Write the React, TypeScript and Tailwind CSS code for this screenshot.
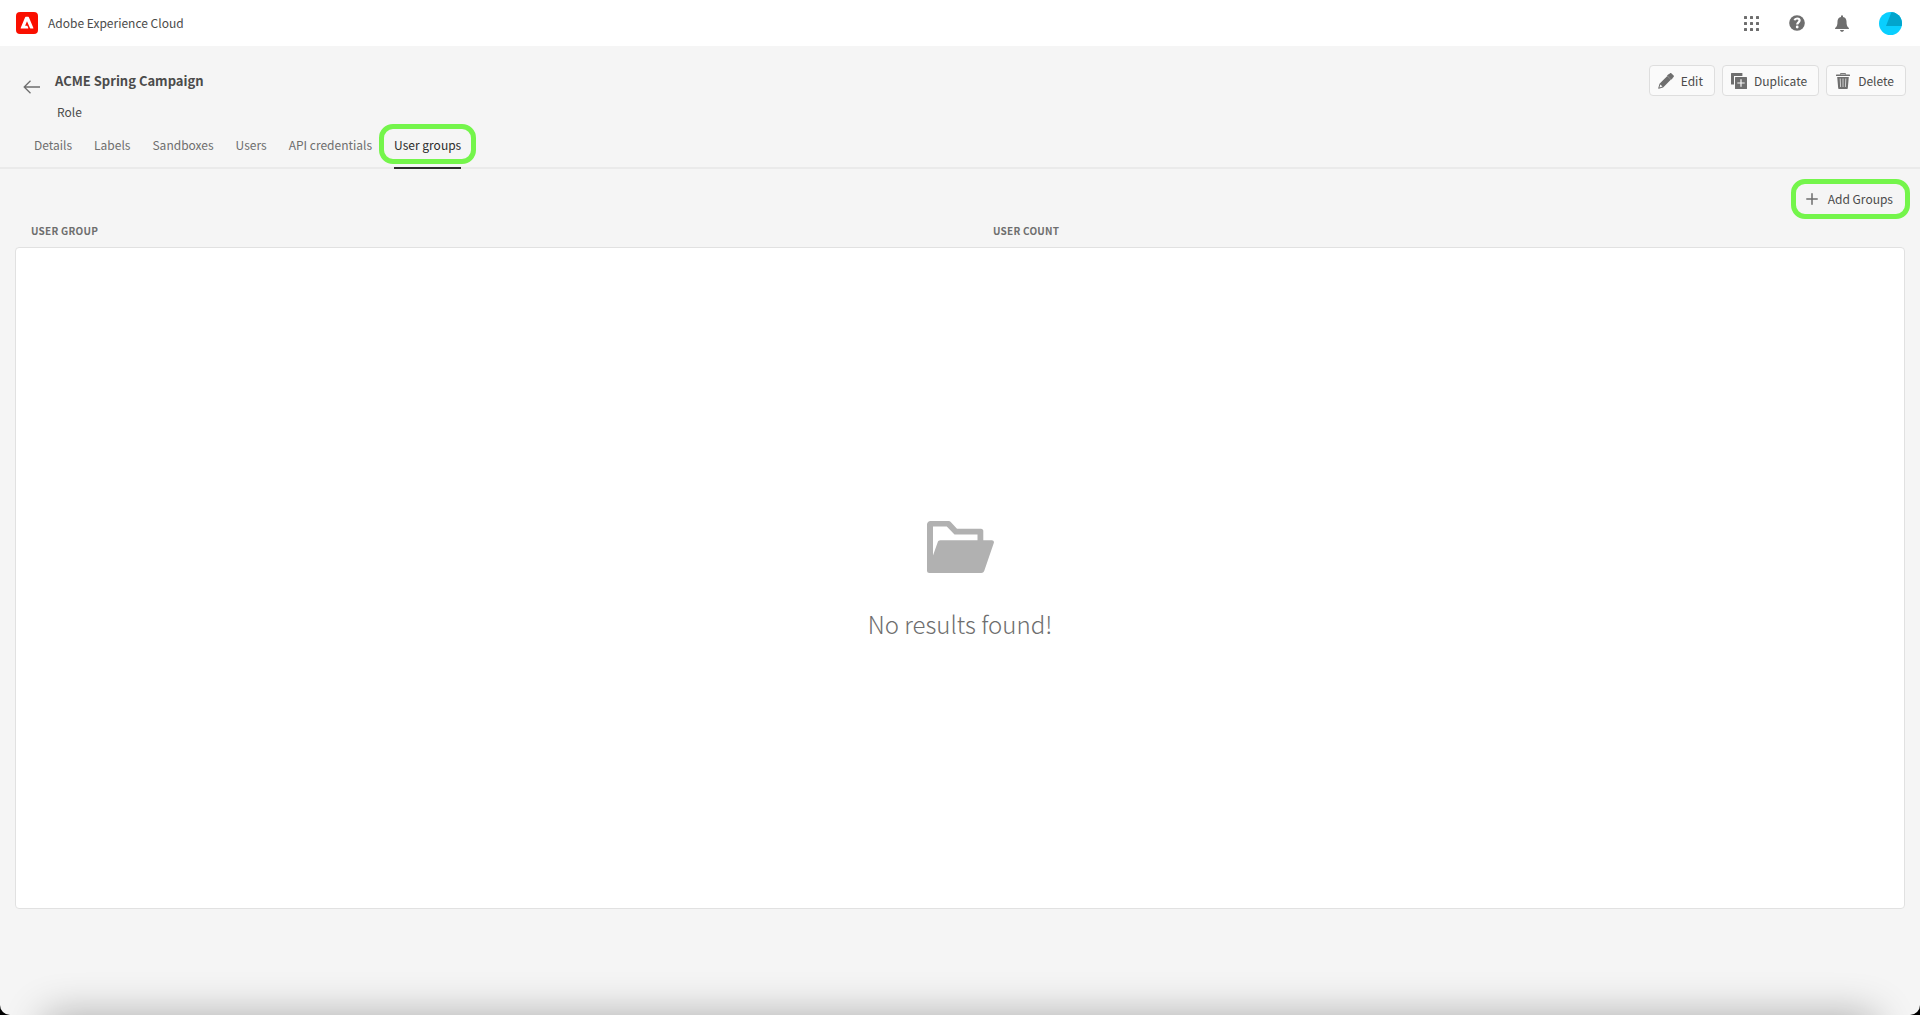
import type { ReactNode } from "react";

const TABS = ["Details", "Labels", "Sandboxes", "Users", "API credentials", "User groups"];
const ACTIVE_TAB = "User groups";

function AdobeLogo() {
  return (
    <svg viewBox="0 0 240 240" className="size-[22px]" aria-hidden="true">
      <rect width="240" height="240" rx="44" fill="#fa0f00" />
      <path
        transform="translate(0 3)"
        fill="#fff"
        d="M186.617 175.95h-28.506a6.243 6.243 0 0 1-5.847-3.769l-30.947-72.359a1.364 1.364 0 0 0-2.611-.034L99.42 145.731a1.635 1.635 0 0 0 1.506 2.269h21.2a3.27 3.27 0 0 1 3.01 1.994l9.281 20.655a3.812 3.812 0 0 1-3.507 5.301H53.734a3.518 3.518 0 0 1-3.213-4.904L99.625 54.278A6.639 6.639 0 0 1 105.843 50h28.314a6.628 6.628 0 0 1 6.218 4.278l49.455 116.768a3.518 3.518 0 0 1-3.213 4.904z"
      />
    </svg>
  );
}

function AppsIcon() {
  const steps = [0, 6, 12];
  return (
    <svg viewBox="0 0 15 15" className="size-[15px]" fill="#6e6e6e" aria-hidden="true">
      {steps.map((y) => steps.map((x) => <rect key={`${x}-${y}`} x={x} y={y} width="3" height="3" rx="0.5" />))}
    </svg>
  );
}

function HelpIcon() {
  return (
    <svg viewBox="0 0 16 16" className="size-4" aria-hidden="true">
      <circle cx="8" cy="8" r="7.8" fill="#6e6e6e" />
      <path d="M5.500 5.300C5.900 4 6.900 3.500 8.100 3.500c1.500 0 2.500.8 2.500 2.100 0 1.700-2.400 1.800-2.400 3.800" fill="none" stroke="#fff" strokeWidth="2.200" />
      <circle cx="8.200" cy="12" r="1.400" fill="#fff" />
    </svg>
  );
}

function BellIcon() {
  return (
    <svg viewBox="0 0 14 17" className="h-[17px] w-[14px]" fill="#6e6e6e" aria-hidden="true">
      <path d="M6 1.200a1 1 0 0 1 2 0v.8c2.300.5 3.500 2.300 3.500 4.600 0 3.600.6 4.900 2.100 6.100.6.500.4 1.300-.3 1.300H.7c-.7 0-.9-.8-.3-1.300C1.900 11.500 2.500 10.200 2.500 6.600 2.500 4.300 3.700 2.500 6 2z" />
      <path d="M5 15h4c-.2 1-1 1.800-2 1.800S5.200 16 5 15z" />
    </svg>
  );
}

function Avatar() {
  return (
    <svg viewBox="0 0 23 23" className="size-[23px]" aria-hidden="true">
      <defs>
        <clipPath id="avatar-clip">
          <circle cx="11.500" cy="11.500" r="11.500" />
        </clipPath>
      </defs>
      <g clipPath="url(#avatar-clip)">
        <rect width="23" height="23" fill="#09cfff" />
        <path d="M12.500 0H23v14H7z" fill="#02a5cd" />
      </g>
    </svg>
  );
}

function BackIcon() {
  return (
    <svg viewBox="0 0 18 14" className="h-[14px] w-[18px]" fill="none" stroke="#6e6e6e" strokeWidth="1.300" aria-hidden="true">
      <path d="M17 7H1.500M7.500.8 1.200 7l6.300 6.200" />
    </svg>
  );
}

function EditIcon() {
  return (
    <svg viewBox="0 0 16 16" className="size-4" fill="#6e6e6e" aria-hidden="true">
      <path d="M10.200 2 12 .3a.9.9 0 0 1 1.300 0l2.300 2.300a.9.9 0 0 1 0 1.300L13.900 5.700zM9.300 2.900 13 6.600l-7.900 7.900-4.300 1.300c-.4.1-.7-.2-.6-.6l1.300-4.400zM2.400 11.500l-1 3.100 3.100-1z" fillRule="evenodd" />
      <path d="M9 2.600l1.500-1.300 4 4L13.200 6.800z" />
    </svg>
  );
}

function DuplicateIcon() {
  return (
    <svg viewBox="0 0 16 16" className="size-4" fill="#6e6e6e" aria-hidden="true">
      <path d="M.6 0h10.800v3H3v8.500H.6a.6.6 0 0 1-.6-.6V.6A.6.6 0 0 1 .6 0z" />
      <path
        fillRule="evenodd"
        d="M4.600 4h10.800a.6.6 0 0 1 .6.600v10.800a.6.6 0 0 1-.6.600H4.600a.6.6 0 0 1-.6-.6V4.600A.6.600 0 0 1 4.600 4zM9.400 6.300v3.100H6.300v1.200h3.100v3.100h1.200v-3.100h3.100V9.400h-3.100V6.300z"
      />
    </svg>
  );
}

function DeleteIcon() {
  return (
    <svg viewBox="-1 0 16 16" className="size-4" aria-hidden="true">
      <path d="M4.500 1.500V.6h5v.9" fill="none" stroke="#6e6e6e" strokeWidth="1" />
      <rect y="1.500" width="14" height="1.500" rx=".5" fill="#6e6e6e" />
      <path d="M1.200 4h11.600l-1 11.200a.8.8 0 0 1-.8.800H3a.8.8 0 0 1-.8-.8z" fill="#6e6e6e" />
      <path d="M4.200 5.500l.4 8.500M7 5.500V14M9.800 5.500 9.400 14" stroke="#d0d0d0" strokeWidth="1" />
    </svg>
  );
}

function AddIcon() {
  return (
    <svg viewBox="0 0 12 12" className="size-3" fill="none" stroke="#6e6e6e" strokeWidth="1.500" strokeLinecap="round" aria-hidden="true">
      <path d="M6 .8v10.400M.8 6h10.400" />
    </svg>
  );
}

function FolderIcon() {
  return (
    <svg viewBox="0 0 67 52" className="h-[52px] w-[67px]" fill="#b1b1b1" aria-hidden="true">
      <path
        fillRule="evenodd"
        d="M3.500 0H21c1.300 0 2.300.4 3.200 1.400L30 7.800h24c1.400 0 2.300.9 2.300 2.300v9.200h8.500c1.600 0 2.500 1.300 2 2.700L57.200 50c-.5 1.300-1.600 2-2.900 2H2.500A2.500 2.500 0 0 1 0 49.500V3.500C0 1.600 1.600 0 3.500 0zM6 5.500V34.500l4.700-13.300c.4-1.200 1.400-1.900 2.600-1.900H50.500V13.500H27.500L19.800 5.500z"
      />
    </svg>
  );
}

function ActionButton({ icon, label }: { icon: ReactNode; label: string }) {
  return (
    <button type="button" className="flex h-[31px] items-center gap-[7px] rounded-[4px] border border-[#dedede] bg-[#fafafa] pr-[11px] pl-2 text-xs text-[#4b4b4b]">
      {icon}
      {label}
    </button>
  );
}

export default function App() {
  return (
    <div className="min-h-screen bg-black font-['Noto_Sans_CJK_SC',sans-serif] text-xs leading-5 text-[#4b4b4b]">
      <div className="relative flex min-h-screen flex-col overflow-hidden rounded-b-[10px] bg-[#f5f5f5]">
        <header className="flex h-[46px] items-center justify-between bg-white px-4">
          <div className="flex items-center gap-2.5">
            <AdobeLogo />
            <span>Adobe Experience Cloud</span>
          </div>
          <nav aria-label="Global" className="flex items-center gap-[30px] pr-0.5">
            <button type="button" aria-label="Apps"><AppsIcon /></button>
            <button type="button" aria-label="Help"><HelpIcon /></button>
            <button type="button" aria-label="Notifications"><BellIcon /></button>
            <button type="button" aria-label="Account"><Avatar /></button>
          </nav>
        </header>

        <section className="flex items-start justify-between pt-[19px] pr-[14px] pl-[23px]">
          <div className="flex gap-[14px]">
            <button type="button" aria-label="Back" className="mt-[15px] self-start"><BackIcon /></button>
            <div>
              <h1 className="pt-1 text-[13px] leading-6 font-bold">ACME Spring Campaign</h1>
              <p className="pt-[9px] pl-0.5 leading-5">Role</p>
            </div>
          </div>
          <div className="flex gap-[7px]">
            <ActionButton icon={<EditIcon />} label="Edit" />
            <ActionButton icon={<DuplicateIcon />} label="Duplicate" />
            <ActionButton icon={<DeleteIcon />} label="Delete" />
          </div>
        </section>

        <div role="tablist" className="flex h-[47px] items-stretch gap-[22px] border-b-2 border-[#eaeaea] pl-[34px]">
          {TABS.map((tab) =>
            tab === ACTIVE_TAB ? (
              <button key={tab} type="button" role="tab" aria-selected="true" className="relative -mb-0.5 flex items-start border-b-2 border-[#2c2c2c] pt-[13px] text-[#2c2c2c]">
                {tab}
                <span className="absolute -inset-x-[15px] top-[2px] h-10 rounded-[14px] border-[5px] border-[#74f54b]" />
              </button>
            ) : (
              <button key={tab} type="button" role="tab" aria-selected="false" className="flex items-start pt-[13px] text-[#6e6e6e]">
                {tab}
              </button>
            ),
          )}
        </div>

        <main className="px-[15px] pt-[10px]">
          <div className="-mr-[5px] flex justify-end">
            <button type="button" className="flex h-10 items-center gap-2.5 rounded-[14px] border-[5px] border-[#74f54b] pr-3 pl-2.5 text-xs">
              <AddIcon />
              Add Groups
            </button>
          </div>
          <table className="w-full table-fixed border-separate border-spacing-0">
            <thead>
              <tr className="h-7 text-left text-[10px] leading-4 tracking-wide text-[#6e6e6e]">
                <th scope="col" className="w-[51%] px-4 pb-1 align-middle font-bold">USER GROUP</th>
                <th scope="col" className="px-3.5 pb-1 align-middle font-bold">USER COUNT</th>
              </tr>
            </thead>
            <tbody>
              <tr>
                <td colSpan={2} className="rounded-[4px] border border-[#e1e1e1] bg-white p-0">
                  <div className="flex h-[calc(100vh-355px)] flex-col items-center justify-center gap-[33px] pt-[7px]">
                    <FolderIcon />
                    <p className="text-2xl leading-9 font-light text-[#6e6e6e]">No results found!</p>
                  </div>
                </td>
              </tr>
            </tbody>
          </table>
        </main>

        <div className="pointer-events-none absolute inset-x-[45px] top-full h-20 shadow-[0_0_40px_rgba(0,0,0,0.3)]" />
      </div>
    </div>
  );
}
